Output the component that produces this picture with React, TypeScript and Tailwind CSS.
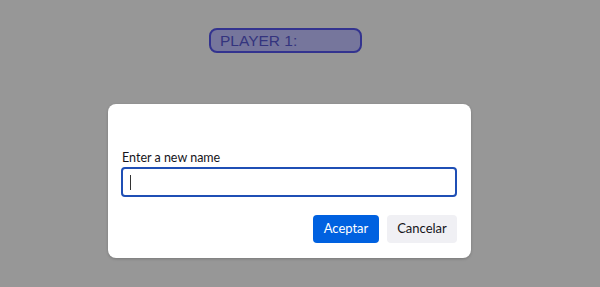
export default function App() {
  return (
    <div className="w-[600px] h-[287px] bg-[#979797] overflow-hidden flex flex-col" style={{ fontFamily: '"Liberation Sans", Arial, sans-serif' }}>
      <div className="ml-[209px] mt-[28px] w-[153px] h-[25px] rounded-[8px] border-2 border-[#33338f] bg-[#76769c] flex items-center pl-[9px]">
        <span className="text-[15.5px] leading-none text-[#34347e]" style={{ fontFamily: '"Liberation Sans", Arial, sans-serif' }}>PLAYER 1:</span>
      </div>
      <div className="ml-[108px] mt-[51px] w-[363px] h-[154px] bg-white rounded-[8px] shadow-[0_1px_3px_rgba(0,0,0,0.2)] flex flex-col pl-[13px] pr-[14px] pt-[46px]" style={{ fontFamily: 'Lato, "Noto Sans", sans-serif' }}>
        <label className="text-[12.5px] leading-[16px] text-[#15141a] ml-[1px]">Enter a new name</label>
        <div className="mt-[1px] h-[30px] rounded-[4px] border-2 border-[#1f4fb5] flex items-center pl-[7px]">
          <div className="w-[1px] h-[15px] bg-[#333]"></div>
        </div>
        <div className="mt-[18px] flex justify-end gap-[8px]">
          <button className="w-[66px] h-[28px] rounded-[4px] bg-[#0061e0] text-white text-[13px]">Aceptar</button>
          <button className="w-[70px] h-[28px] rounded-[4px] bg-[#f0f0f4] text-[#15141a] text-[13px]">Cancelar</button>
        </div>
      </div>
    </div>
  );
}
